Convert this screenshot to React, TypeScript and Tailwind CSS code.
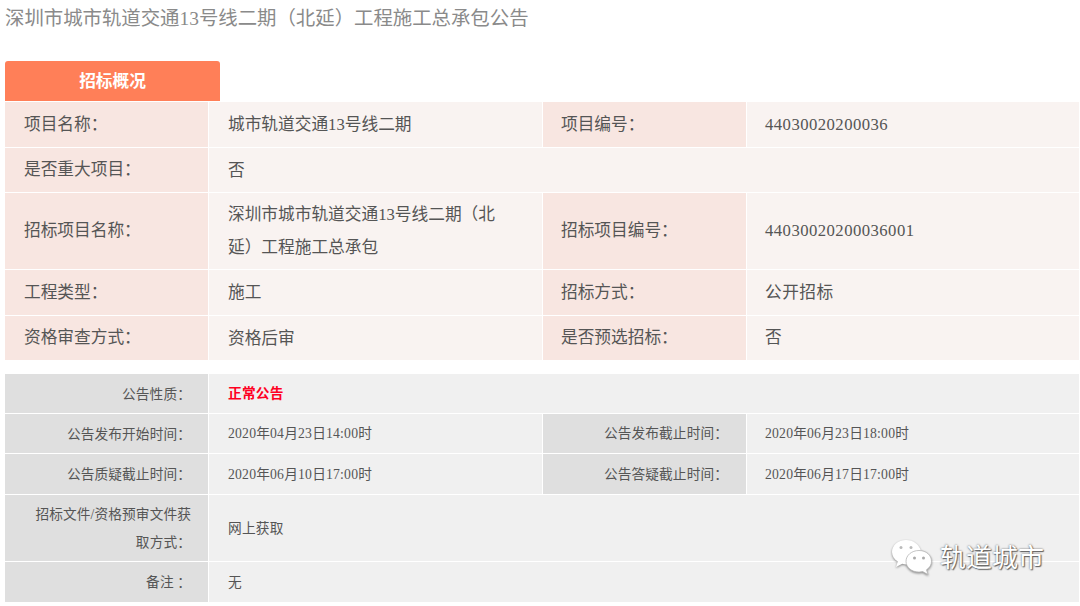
const font = "font-['Liberation_Serif','Noto_Sans_CJK_SC',serif]"

type Row = { h: string; cells: string[]; wide?: boolean }

const overview: Row[] = [
  { h: 'h-[45px]', cells: ['项目名称：', '城市轨道交通13号线二期', '项目编号：', '44030020200036'] },
  { h: 'h-[44px]', cells: ['是否重大项目：', '否'], wide: true },
  { h: 'h-[76px]', cells: ['招标项目名称：', '深圳市城市轨道交通13号线二期（北延）工程施工总承包', '招标项目编号：', '44030020200036001'] },
  { h: 'h-[45px]', cells: ['工程类型：', '施工', '招标方式：', '公开招标'] },
  { h: 'h-[44px]', cells: ['资格审查方式：', '资格后审', '是否预选招标：', '否'] },
]

const notice: Row[] = [
  { h: 'h-[39px]', cells: ['公告性质：', '正常公告'], wide: true },
  { h: 'h-[39px]', cells: ['公告发布开始时间：', '2020年04月23日14:00时', '公告发布截止时间：', '2020年06月23日18:00时'] },
  { h: 'h-[40px]', cells: ['公告质疑截止时间：', '2020年06月10日17:00时', '公告答疑截止时间：', '2020年06月17日17:00时'] },
  { h: 'h-[66px]', cells: ['招标文件/资格预审文件获取方式：', '网上获取'], wide: true },
  { h: 'h-[40px]', cells: ['备注 ：', '无'], wide: true },
]

function OverviewRow({ row }: { row: Row }) {
  return (
    <div className={`grid grid-cols-[203px_333px_203px_1fr] gap-x-px mb-px text-[16.7px] text-[#555] ${row.h}`}>
      <div className="flex items-center pl-[19px] bg-[#f8e6e1]">{row.cells[0]}</div>
      <div className={`flex items-center pl-[19px] pr-[40px] leading-[33px] bg-[#f9f3f1] ${row.wide ? 'col-span-3' : ''}`}>{row.cells[1]}</div>
      {!row.wide && <div className="flex items-center pl-[18px] bg-[#f8e6e1]">{row.cells[2]}</div>}
      {!row.wide && <div className="flex items-center pl-[18px] tracking-[0.45px] bg-[#f9f3f1]">{row.cells[3]}</div>}
    </div>
  )
}

function NoticeRow({ row, index }: { row: Row; index: number }) {
  return (
    <div className={`grid grid-cols-[203px_333px_203px_1fr] gap-x-px mb-px text-[13.7px] text-[#555] ${row.h}`}>
      <div className="flex items-center justify-end text-right pt-[2px] pl-[26px] pr-[17px] leading-[28px] tracking-[0.1px] bg-[#dfdfdf]">{row.cells[0]}</div>
      <div className={`flex items-center pt-[2px] pl-[19px] tracking-[0.2px] bg-[#f0f0f0] ${row.wide ? 'col-span-3' : ''} ${index === 0 ? 'font-bold text-[#ff0022]' : ''}`}>{row.cells[1]}</div>
      {!row.wide && <div className="flex items-center justify-end pt-[2px] pr-[18px] tracking-[0.1px] bg-[#dfdfdf]">{row.cells[2]}</div>}
      {!row.wide && <div className="flex items-center pt-[2px] pl-[18px] tracking-[0.2px] bg-[#f0f0f0]">{row.cells[3]}</div>}
    </div>
  )
}

function WechatIcon() {
  return (
    <svg width="42" height="40" viewBox="0 0 42 40" className="drop-shadow-[0_1px_1px_rgba(0,0,0,0.45)]">
      <path d="M15 1C7 1 1 6.500 1 13c0 4 2.300 7.300 5.800 9.500L5 28l6.300-3.200c1.400.4 2.700.6 4.200.6 1 0 2-.1 3-.3C25 20 28 14 30 12 28.500 5.800 22.500 1 15 1z" fill="#fff" />
      <path d="M28 11.500c-7.300 0-13 4.800-13 10.800s5.700 10.800 13 10.800c1.300 0 2.500-.2 3.700-.5l5.300 3-1.500-4.800c3.200-2 5-5 5-8.500 0-6-5.300-10.800-12.500-10.800z" fill="#fff" stroke="#b5b5b5" strokeWidth="0.8" />
      <circle cx="10" cy="8.500" r="1.500" fill="#bbb" />
      <circle cx="20" cy="8.500" r="1.500" fill="#bbb" />
      <circle cx="23.500" cy="19" r="1.500" fill="#aaa" />
      <circle cx="32.500" cy="19" r="1.500" fill="#aaa" />
    </svg>
  )
}

export default function App() {
  return (
    <div className={`relative w-[1080px] h-[606px] overflow-hidden bg-white pl-[5px] pr-px ${font}`}>
      <h1 className="h-[61px] pt-[6px] text-[19.4px] leading-[26px] font-normal text-[#8a8a8a]">
        深圳市城市轨道交通13号线二期（北延）工程施工总承包公告
      </h1>
      <div className="flex items-center justify-center w-[215px] h-[40px] mb-px pt-[2px] rounded-t-[3px] bg-[#ff7f58] text-[16.7px] font-bold text-white">
        招标概况
      </div>
      <div className="mb-[14px]">
        {overview.map((row) => (
          <OverviewRow key={row.cells[0]} row={row} />
        ))}
      </div>
      <div>
        {notice.map((row, i) => (
          <NoticeRow key={row.cells[0]} row={row} index={i} />
        ))}
      </div>
      {/* 公众号水印 */}
      <div className="absolute left-[891px] top-[539px] flex items-center gap-[7px]">
        <WechatIcon />
        <span className="text-[26px] leading-[40px] text-white [text-shadow:0_0_2px_#555,1px_1px_1px_#666]">轨道城市</span>
      </div>
    </div>
  )
}
